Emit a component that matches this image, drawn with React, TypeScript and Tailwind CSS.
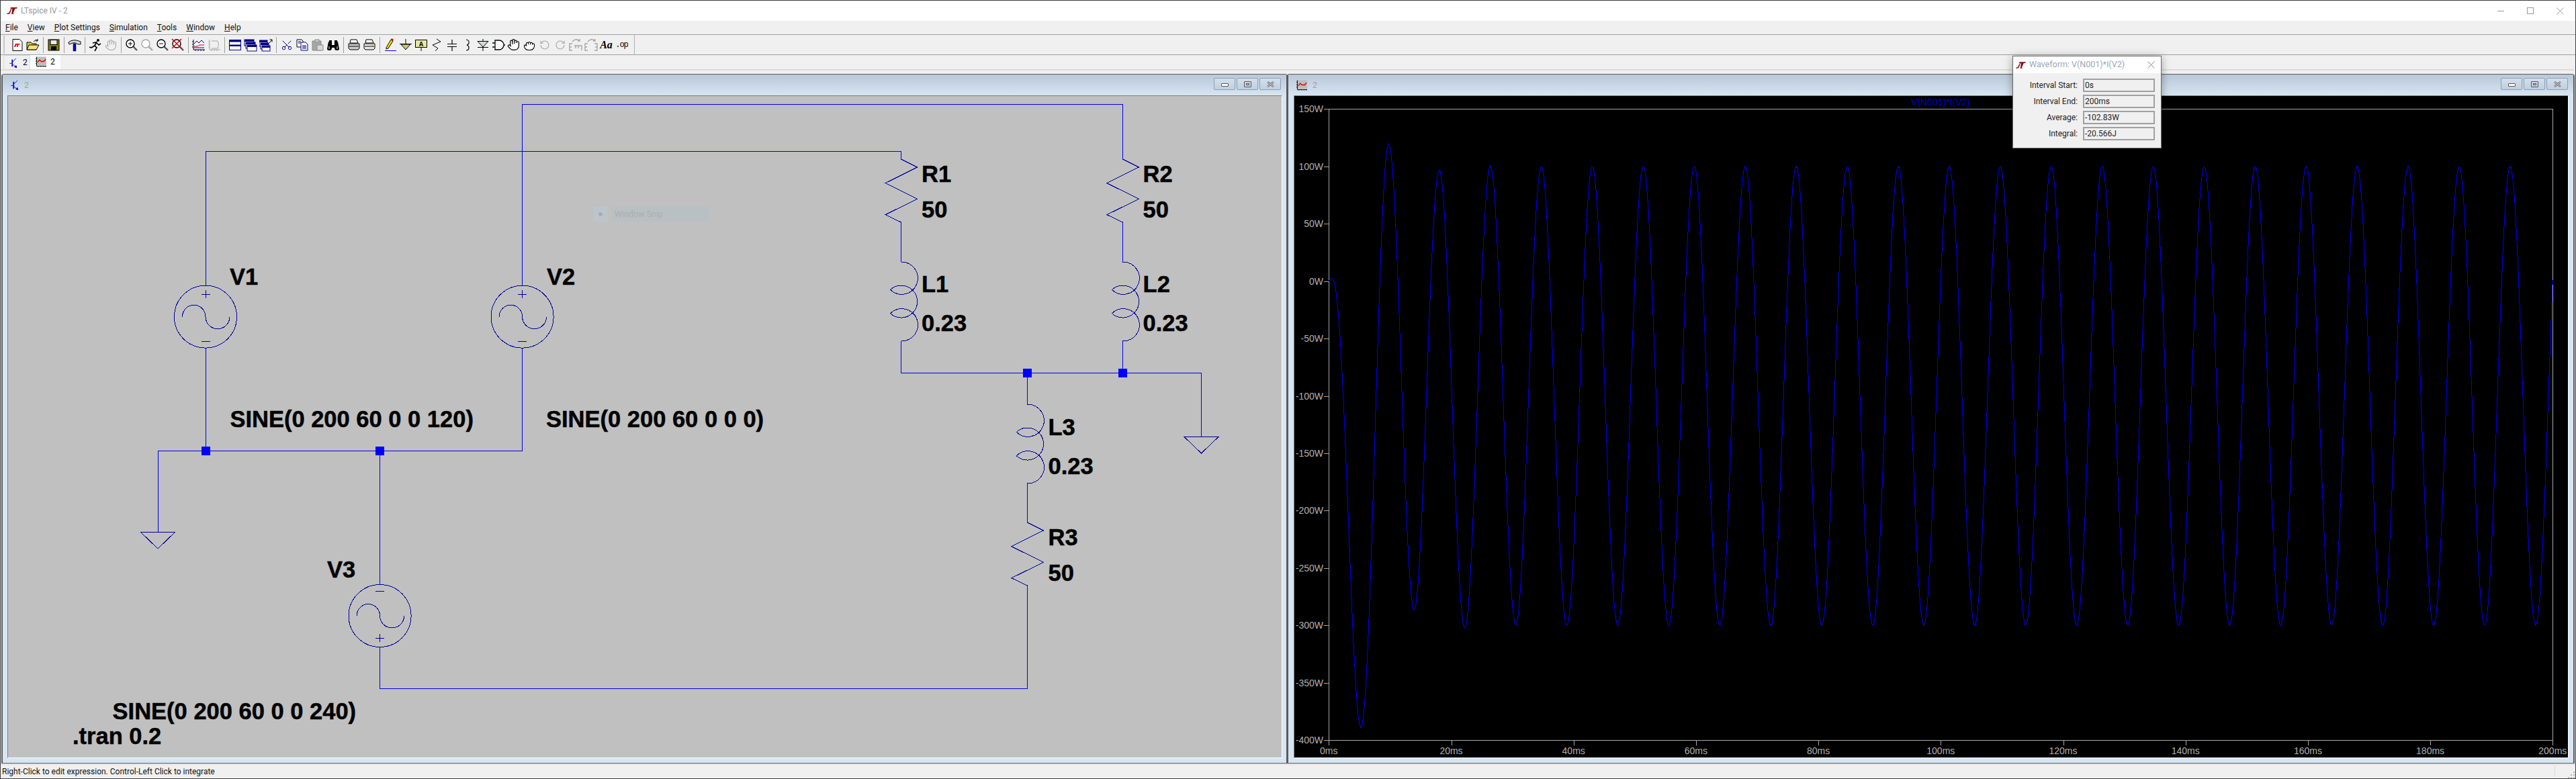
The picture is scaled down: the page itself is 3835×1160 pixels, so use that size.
import React from "react";
import { Hand, Grab, Scissors, RotateCcw, RotateCw } from "lucide-react";

const WIRE = "#0000e6";
const PART = "#00009a";

// page coordinates are used as the viewBox of both canvases
function Res({ x, y }: { x: number; y: number }) {
  return (
    <path
      d={`M${x} ${y} L${x + 24} ${y + 12} L${x - 23.5} ${y + 35.7} L${x + 24} ${y + 59.3} L${x - 23.5} ${y + 82.7} L${x} ${y + 94}`}
      fill="none"
      stroke={PART}
    />
  );
}

function Ind({ x, y }: { x: number; y: number }) {
  return (
    <path
      d={`M${x} ${y} A24 24 0 1 1 ${x - 16} ${y + 41} A24 24 0 1 1 ${x - 16} ${y + 76.5} A24 24 0 1 1 ${x} ${y + 117.4}`}
      fill="none"
      stroke={PART}
    />
  );
}

function Src({ x, y, flip }: { x: number; y: number; flip?: boolean }) {
  const plus = flip ? y + 33.4 : y - 33.4;
  const minus = flip ? y - 36.6 : y + 36.6;
  return (
    <g fill="none" stroke={PART}>
      <ellipse cx={x} cy={y} rx={46.5} ry={46.5} />
      <path d={`M${x - 6.5} ${plus} H${x + 6.5} M${x} ${plus - 6} V${plus + 6}`} />
      <path d={`M${x - 6.5} ${minus} H${x + 6.5}`} />
      <path d={`M${x - 34.5} ${y} A17.25 17.5 0 0 1 ${x} ${y} A18 18 0 0 0 ${x + 36} ${y}`} />
    </g>
  );
}

function Gnd({ x, y }: { x: number; y: number }) {
  return <path d={`M${x - 26} ${y} H${x + 26} L${x} ${y + 25} Z`} fill="none" stroke={PART} />;
}

function Label({ x, y, children }: { x: number; y: number; children: string }) {
  return (
    <text
      x={x}
      y={y}
      fontFamily="'Liberation Sans', Arial, sans-serif"
      fontWeight={700}
      fontSize={34.5}
      fill="#000"
      stroke="#000"
      strokeWidth={0.5}
    >
      {children}
    </text>
  );
}

function Schematic() {
  const wires = [
    "M306 225.3 H1341.5 V237",
    "M1341.5 331 V390.3",
    "M1341.5 507.7 V555.3 H1788.5 V650",
    "M777.6 425.2 V155 H1671.4 V237",
    "M1671.4 331 V390.3",
    "M1671.4 507.7 V555.3",
    "M306 225.3 V425.2",
    "M306 518.2 V671",
    "M777.6 518.2 V671 H235 V792",
    "M565.6 671 V870.5",
    "M565.6 963.5 V1025 H1529.4 V872",
    "M1529.4 555.3 V602.3",
    "M1529.4 719.7 V778",
  ];
  return (
    <svg viewBox="12 143 1896 985" className="block w-[1896px] h-[985px] bg-[#c0c0c0]">
      <g shapeRendering="crispEdges">
        {wires.map((d) => (
          <path key={d} d={d} fill="none" stroke={WIRE} />
        ))}
        {[
          [306, 671],
          [565.6, 671],
          [1529.4, 555.3],
          [1671.4, 555.3],
        ].map(([x, y]) => (
          <rect key={x} x={x - 6.5} y={y - 6.5} width={13} height={13} fill="#0000ff" />
        ))}
        <Res x={1341.5} y={237} />
        <Res x={1671.4} y={237} />
        <Res x={1529.4} y={778} />
        <Ind x={1341.5} y={390.3} />
        <Ind x={1671.4} y={390.3} />
        <Ind x={1529.4} y={602.3} />
        <Src x={306} y={471.7} />
        <Src x={777.6} y={471.7} />
        <Src x={565.6} y={917} flip />
        <Gnd x={235} y={792} />
        <Gnd x={1788.5} y={650} />
      </g>
      <Label x={1372} y={270.7}>R1</Label>
      <Label x={1372} y={323.7}>50</Label>
      <Label x={1372} y={434.7}>L1</Label>
      <Label x={1372} y={493.3}>0.23</Label>
      <Label x={1701.6} y={270.7}>R2</Label>
      <Label x={1701.6} y={323.7}>50</Label>
      <Label x={1701.6} y={434.7}>L2</Label>
      <Label x={1701.6} y={493.3}>0.23</Label>
      <Label x={1560.5} y={648}>L3</Label>
      <Label x={1560.5} y={706.3}>0.23</Label>
      <Label x={1560.5} y={812.3}>R3</Label>
      <Label x={1560.5} y={865}>50</Label>
      <Label x={342} y={424}>V1</Label>
      <Label x={814} y={424}>V2</Label>
      <Label x={487} y={860}>V3</Label>
      <Label x={342.4} y={636}>SINE(0 200 60 0 0 120)</Label>
      <Label x={813} y={636}>SINE(0 200 60 0 0 0)</Label>
      <Label x={167.6} y={1071}>SINE(0 200 60 0 0 240)</Label>
      <Label x={108} y={1107.7}>.tran 0.2</Label>
    </svg>
  );
}

const PX0 = 1978.3;
const PMS = 9.11;
const PY0 = 162.3;
const PW = 85.45 / 50;

function power(t: number) {
  return (
    -100 +
    200 * Math.cos((2 * Math.PI * (t - 1.389)) / 8.333) -
    321 * Math.exp(-t / 4.6) * Math.sin((2 * Math.PI * t) / 16.667)
  );
}

function tracePoints() {
  const pts: string[] = [];
  for (let t = 0; t <= 200; t += 0.2) {
    pts.push(`${(PX0 + t * PMS).toFixed(1)},${(PY0 + (150 - power(t)) * PW).toFixed(1)}`);
  }
  return pts.join(" ");
}

function Plot() {
  const ys = [150, 100, 50, 0, -50, -100, -150, -200, -250, -300, -350, -400];
  const xs = [0, 20, 40, 60, 80, 100, 120, 140, 160, 180, 200];
  const font = "'Liberation Sans', Arial, sans-serif";
  return (
    <svg viewBox="1927 143 1896 985" className="block w-[1896px] h-[985px] bg-black">
      <g shapeRendering="crispEdges" stroke="#a8a8a8" fill="none">
        <path d="M1971 162.5 H3800.5 V1110 M1978.5 162.5 V1110 M1971 1102.5 H3800.5" />
        {ys.map((v) => {
          const y = Math.round(PY0 + (150 - v) * PW) + 0.5;
          return <path key={v} d={`M1971 ${y} H1978`} />;
        })}
        {xs.map((ms) => {
          const x = Math.round(PX0 + ms * PMS) + 0.5;
          return <path key={ms} d={`M${x} 1102 V1110`} />;
        })}
      </g>
      <polyline points={tracePoints()} fill="none" stroke="#0000ff" shapeRendering="crispEdges" />
      {ys.map((v) => (
        <text key={v} x={1970} y={PY0 + (150 - v) * PW + 5} textAnchor="end" fontFamily={font} fontSize={14} fill="#b0b0b0">
          {v}W
        </text>
      ))}
      {xs.map((ms) => (
        <text key={ms} x={PX0 + ms * PMS} y={1123} textAnchor="middle" fontFamily={font} fontSize={14} fill="#b0b0b0">
          {ms}ms
        </text>
      ))}
      <text x={2889} y={157} textAnchor="middle" fontFamily={font} fontSize={14} fill="#0000c8">
        V(N001)*I(V2)
      </text>
    </svg>
  );
}

/* small icons */
function Ic({ children }: { children: React.ReactNode }) {
  return (
    <svg viewBox="0 0 20 20" className="w-5 h-5">
      {children}
    </svg>
  );
}

function LtLogo({ className }: { className: string }) {
  return (
    <svg viewBox="0 0 16 10" className={className}>
      <path d="M0 10 L1 8.5 L3 8.5 L6.5 1.5 L5 1.5 L6 0 L16 0 L15 1.8 L12.6 1.8 L9.6 8.5 L10.8 10 L7 10 L7.4 8.5 L8.4 1.8 L7.6 1.8 L5 8.5 L3.6 10 Z" fill="#8c0f0f" />
    </svg>
  );
}

function Transistor({ className }: { className: string }) {
  return (
    <svg viewBox="0 0 13 17" className={className} fill="none" stroke="#0000e0">
      <path d="M0 9.5 H4" />
      <path d="M4.5 3 V15" strokeWidth={2} />
      <path d="M5 7 L11 1 M5 11 L11 16" />
      <path d="M12 17 L8.5 15.5 L11 13 Z" fill="#0000e0" />
    </svg>
  );
}

function PlotIcon({ className }: { className: string }) {
  return (
    <svg viewBox="0 0 17 16" className={className} fill="none">
      <rect x="2" y="0" width="15" height="14" fill="#bdbdbd" />
      <path d="M1.5 0 V15 H17 M0 3 H2 M0 7 H2 M0 11 H2 M4 15 V16 M8 15 V16 M12 15 V16 M16 15 V16" stroke="#000" />
      <path d="M3 9 L6 5 L9 7.5 L13 7.5 L16 4" stroke="#e00000" strokeWidth={1.5} />
    </svg>
  );
}

function Magnifier({ c = "#000", children }: { c?: string; children?: React.ReactNode }) {
  return (
    <Ic>
      <circle cx="8" cy="8" r="6" fill="#fff" stroke={c} strokeWidth={1.4} />
      <path d="M12.5 12.5 L18 18" stroke={c === "#000" ? "#555" : c} strokeWidth={2.4} />
      {children}
    </Ic>
  );
}

const Gray = "#a6a6a6";

function Printer({ dots }: { dots?: boolean }) {
  return (
    <Ic>
      <path d="M5 2 H14 L16 7 H4 Z" fill="#fff" stroke="#000" />
      <path d="M2 8 H18 V15 L16 17 H4 L2 15 Z" fill={dots ? "#ccc" : "#e8e8e8"} stroke="#000" />
      <path d="M3 12 H17" stroke="#000" />
      {!dots && <path d="M13 9 H16" stroke="#d8b000" strokeWidth={1.5} />}
    </Ic>
  );
}

function Win({ x, y, w = 14, h = 9 }: { x: number; y: number; w?: number; h?: number }) {
  return (
    <g>
      <rect x={x} y={y} width={w} height={h} fill="#fff" stroke="#000080" />
      <rect x={x} y={y} width={w} height={3} fill="#000080" />
    </g>
  );
}

function Sep() {
  return (
    <div className="w-2 h-6 flex justify-center">
      <div className="w-px h-full bg-[#a0a0a0]" />
    </div>
  );
}

function Tool({ children }: { children: React.ReactNode }) {
  return <div className="w-[23px] h-6 flex items-center justify-center shrink-0">{children}</div>;
}

function Toolbar() {
  return (
    <div className="h-[31px] bg-[#f0f0f0] border-y border-[#a0a0a0] flex items-center pl-[4px] relative">
      <div className="w-[9px] h-[27px] border-l-2 border-[#c8c8c8]" />
      <Tool>
        <Ic>
          <path d="M3 1.5 H13 L17 5.5 V18.5 H3 Z" fill="#fff" stroke="#000" />
          <path d="M5 13 L7 8 H14 L13 9.6 H11.6 L10.4 13 H8.6 L9.6 9.6 H8.4 L7 13 Z" fill="#e00000" />
        </Ic>
      </Tool>
      <Tool>
        <Ic>
          <path d="M1 17 V6 H7 L9 8 H15 V17 Z" fill="#e8c040" stroke="#000" />
          <path d="M1 17 L4 10 H19 L15 17 Z" fill="#ffe070" stroke="#000" />
          <path d="M11 5 Q14 1 17 3 M17 1 V4 H14" fill="none" stroke="#000" />
        </Ic>
      </Tool>
      <Sep />
      <Tool>
        <Ic>
          <rect x="2" y="2" width="16" height="16" fill="#808000" stroke="#000" />
          <rect x="5" y="2.5" width="10" height="7" fill="#e8e8d8" stroke="#000" />
          <rect x="6" y="12" width="8" height="6" fill="#000" />
        </Ic>
      </Tool>
      <Sep />
      <Tool>
        <Ic>
          <path d="M1 6 Q8 0 19 5 V9 H15 Q10 5 5 8 L2 9 Z" fill="#d8d8d8" stroke="#000" />
          <rect x="8" y="8" width="4" height="11" fill="#0000d0" stroke="#000" strokeWidth={0.5} />
        </Ic>
      </Tool>
      <Sep />
      <Tool>
        <Ic>
          <circle cx="14" cy="3" r="2" fill="#000" />
          <path d="M12 5 L9 11 L12 14 L9 19 M9 11 L4 14 L1 13 M11 6 L6 7 M12 7 L15 10 L18 8" fill="none" stroke="#000" strokeWidth={1.7} />
        </Ic>
      </Tool>
      <Tool>
        <Hand size={18} strokeWidth={1.4} color={Gray} />
      </Tool>
      <Sep />
      <Tool>
        <Magnifier>
          <path d="M5 8 H11 M8 5 V11" stroke="#000" />
        </Magnifier>
      </Tool>
      <Tool>
        <Magnifier c={Gray} />
      </Tool>
      <Tool>
        <Magnifier>
          <path d="M5 8 H11" stroke="#000" />
        </Magnifier>
      </Tool>
      <Tool>
        <Magnifier>
          <path d="M1 1 L15 15 M15 1 L1 15" stroke="#e00000" strokeWidth={1.5} />
        </Magnifier>
      </Tool>
      <Sep />
      <Tool>
        <Ic>
          <path d="M2 2 V17 H19 M0 5 H2 M0 9 H2 M0 13 H2 M5 17 V19 M9 17 V19 M13 17 V19 M17 17 V19" stroke="#000" fill="none" />
          <path d="M3 8 L7 4 L10 7 L14 3 L18 7" stroke="#000080" fill="none" />
          <path d="M3 12 H8 L11 10 H18" stroke="#e00000" fill="none" />
          <path d="M3 14 H18" stroke="#0000e0" />
        </Ic>
      </Tool>
      <Tool>
        <Ic>
          <path d="M3 2 V17 H19 M1 5 H3 M1 9 H3 M1 13 H3 M6 17 V19 M10 17 V19 M14 17 V19 M6 4 H15 Q18 9 15 15 H6" stroke={Gray} fill="none" />
        </Ic>
      </Tool>
      <Sep />
      <Tool>
        <Ic>
          <rect x="1.5" y="2.5" width="17" height="15" fill="#fff" stroke="#000080" />
          <rect x="1.5" y="2.5" width="17" height="3" fill="#000080" />
          <rect x="1.5" y="9.5" width="17" height="2.5" fill="#000080" />
        </Ic>
      </Tool>
      <Tool>
        <Ic>
          <Win x={1} y={2} />
          <Win x={3} y={6} />
          <Win x={5} y={10} />
        </Ic>
      </Tool>
      <Tool>
        <Ic>
          <Win x={0} y={3} w={12} />
          <Win x={2} y={7} w={12} />
          <Win x={4} y={11} w={12} h={8} />
          <path d="M15 7 L19 2 M15.5 2 H19 V5.5" fill="none" stroke="#000" />
        </Ic>
      </Tool>
      <Sep />
      <Tool>
        <Scissors size={18} strokeWidth={1.3} color="#000080" className="-rotate-90" />
      </Tool>
      <Tool>
        <Ic>
          <path d="M2 2 H9 L11 4 V13 H2 Z" fill="#fff" stroke="#000" />
          <path d="M8 6 H15 L18 9 V18 H8 Z" fill="#fff" stroke="#000080" />
          <path d="M4 5 H8 M4 7 H7 M10 11 H16 M10 13 H16 M10 15 H16" stroke="#000080" />
        </Ic>
      </Tool>
      <Tool>
        <Ic>
          <path d="M2 4 H15 V18 H2 Z" fill={Gray} stroke="#8a8a8a" />
          <rect x="6" y="2" width="6" height="4" fill="#c8c8c8" stroke="#8a8a8a" />
          <path d="M9 10 H18 V18 H9 Z" fill="#d8d8d8" stroke="#8a8a8a" />
        </Ic>
      </Tool>
      <Tool>
        <Ic>
          <path d="M3 5 H8 V10 H12 V5 H17 L19 16 Q19 18 15 18 Q12 18 12 14 H8 Q8 18 5 18 Q1 18 1 16 Z" fill="#000" />
          <path d="M4 4 H8 M12 4 H16" stroke="#000" strokeWidth={2} />
          <path d="M4 12 V16 M16 12 V16" stroke="#fff" />
        </Ic>
      </Tool>
      <Sep />
      <Tool>
        <Printer dots />
      </Tool>
      <Tool>
        <Printer />
      </Tool>
      <Sep />
      <Tool>
        <Ic>
          <path d="M4 14 L11 2 L14 4 L7 15 L4 16 Z" fill="#ffe000" stroke="#000" />
          <path d="M11 2 L14 4 L15 2 L12 0 Z" fill="#e00000" />
          <path d="M2 18.5 H19" stroke="#0000ff" />
        </Ic>
      </Tool>
      <Tool>
        <Ic>
          <path d="M10 1 V8 M1 8.5 H19" stroke="#000" />
          <path d="M3 9 H17 L10 17 Z" fill="#c8c878" stroke="#000" />
        </Ic>
      </Tool>
      <Tool>
        <Ic>
          <rect x="1.5" y="2.5" width="17" height="11" fill="#e8e8a0" stroke="#000" />
          <path d="M10 14 V19" stroke="#000" />
          <text x="10" y="12" textAnchor="middle" fontSize="10" fontWeight="700" fontFamily="'Liberation Mono', monospace" fill="#000">
            A
          </text>
        </Ic>
      </Tool>
      <Tool>
        <Ic>
          <path d="M10 1 L16 5 L4 10 L12 15 L8 19" fill="none" stroke="#000" />
        </Ic>
      </Tool>
      <Tool>
        <Ic>
          <path d="M10 2 V8 M3 8.5 H17 M3 12.5 H17 M10 13 V19" fill="none" stroke="#000" strokeWidth={1.2} />
        </Ic>
      </Tool>
      <Tool>
        <Ic>
          <path d="M8 2 Q13 3 12 7 Q11 10 9 10 Q12 11 12 14 Q12 18 8 18" fill="none" stroke="#000" strokeWidth={1.2} />
        </Ic>
      </Tool>
      <Tool>
        <Ic>
          <path d="M2 4.5 H18 L10 13 Z" fill="#d0d8d8" stroke="#000" />
          <path d="M2 13.5 H18 M10 1 V4 M10 13 V19" stroke="#000" />
        </Ic>
      </Tool>
      <Tool>
        <Ic>
          <path d="M5 3 H11 A7 7 0 0 1 11 17 H5 Z M1 7 H5 M1 13 H5 M18 10 H20" fill="#fff" stroke="#000" strokeWidth={1.3} />
        </Ic>
      </Tool>
      <Tool>
        <Hand size={19} strokeWidth={1.5} color="#000" fill="#fff" />
      </Tool>
      <Tool>
        <Grab size={18} strokeWidth={1.5} color="#000" fill="#fff" />
      </Tool>
      <Tool>
        <RotateCcw size={16} strokeWidth={1.6} color={Gray} />
      </Tool>
      <Tool>
        <RotateCw size={16} strokeWidth={1.6} color={Gray} />
      </Tool>
      <Tool>
        <Ic>
          <path d="M5 5 Q10 -1 16 4 M16 1 V4 H13 M5 8 H1 V18 H5 M1 13 H4 M8 11 H19 V18 M10 11 V15 M14 11 V15" fill="none" stroke={Gray} strokeWidth={1.4} />
        </Ic>
      </Tool>
      <Tool>
        <Ic>
          <path d="M5 5 Q10 -1 16 4 M16 1 V4 H13 M5 8 H1 V18 H5 M1 13 H4 M15 8 H19 V18 H15 M19 13 H16" fill="none" stroke={Gray} strokeWidth={1.4} />
        </Ic>
      </Tool>
      <Tool>
        <span className="font-['Liberation_Serif',serif] italic font-bold text-[16px] leading-none text-black">Aa</span>
      </Tool>
      <Tool>
        <span className="font-['Liberation_Mono',monospace] text-[12px] leading-none text-black tracking-[-1px]">.op</span>
      </Tool>
      <div className="ml-[7px] w-px h-[29px] bg-[#b0b0b0]" />
    </div>
  );
}

function CaptionButton({ kind }: { kind: "min" | "max" | "close" }) {
  return (
    <div className="w-[32px] h-[18px] rounded-[2px] border border-[#8c9fb8] bg-gradient-to-b from-[#d3dfeb] to-[#c0cfdf] flex items-center justify-center">
      {kind === "min" && <div className="mt-[3px] w-[11px] h-[5px] border border-[#555] rounded-[1px] bg-white" />}
      {kind === "max" && (
        <div className="w-[11px] h-[9px] border border-[#555] rounded-[1px] flex items-center justify-center">
          <div className="w-[5px] h-[3px] border border-[#555]" />
        </div>
      )}
      {kind === "close" && (
        <svg viewBox="0 0 11 9" className="w-[11px] h-[9px]">
          <path d="M1 1 L10 8 M10 1 L1 8" stroke="#555" strokeWidth={2.6} />
          <path d="M1 1 L10 8 M10 1 L1 8" stroke="#fff" strokeWidth={1} />
        </svg>
      )}
    </div>
  );
}

function MdiWindow({
  icon,
  className,
  canvasClass,
  children,
}: {
  icon: React.ReactNode;
  className: string;
  canvasClass: string;
  children: React.ReactNode;
}) {
  return (
    <div className={`${className} h-full rounded-t-[4px] border-2 border-b-[1px] border-[#5a5a5a] border-t-[1px] bg-[#d7e5f3] flex flex-col`}>
      <div className="h-[31px] shrink-0 bg-gradient-to-b from-[#b9c8d7] to-[#d7e5f3] flex items-center justify-between pl-[12px] pr-[8px]">
        <div className="flex items-center gap-[8px]">
          {icon}
          <span className="text-[12px] text-[#a0a0a0]">2</span>
        </div>
        <div className="flex gap-[2px] pb-[3px]">
          <CaptionButton kind="min" />
          <CaptionButton kind="max" />
          <CaptionButton kind="close" />
        </div>
      </div>
      <div className={`${canvasClass} w-fit border border-[#808080] border-b-white border-r-white`}>{children}</div>
    </div>
  );
}

function Field({ label, value }: { label: string; value: string }) {
  return (
    <div className="flex items-center">
      <span className="w-[96px] text-right text-[12px] text-[#222] leading-none">{label}</span>
      <div className="ml-[8px] w-[107px] h-[20px] border-2 border-[#a0a0a0] bg-[#f0f0f0] flex items-center pl-[1px] text-[12px] text-[#222]">
        {value}
      </div>
    </div>
  );
}

export default function App() {
  const menus = ["File", "View", "Plot Settings", "Simulation", "Tools", "Window", "Help"];
  return (
    <div className="relative w-[3835px] h-[1160px] overflow-hidden border border-[#3c3c3c] bg-[#f0f0f0] font-['Roboto',sans-serif] flex flex-col">
      {/* title bar */}
      <div className="h-[30px] bg-white flex items-center pl-[9px] shrink-0">
        <LtLogo className="w-[16px] h-[10px]" />
        <span className="ml-[5px] text-[12px] text-[#9a9a9a]">LTspice IV - 2</span>
        <div className="ml-auto flex items-center gap-[34px] pr-[17px]">
          <div className="w-[10px] h-px bg-[#999]" />
          <div className="w-[10px] h-[10px] border border-[#999]" />
          <svg viewBox="0 0 11 11" className="w-[11px] h-[11px]">
            <path d="M0.5 0.5 L10.5 10.5 M10.5 0.5 L0.5 10.5" stroke="#999" />
          </svg>
        </div>
      </div>
      {/* menu */}
      <div className="h-[20px] shrink-0 flex items-center gap-[14px] pl-[7px] text-[12px] text-[#111]">
        {menus.map((m) => (
          <span key={m}>
            <span className="underline">{m[0]}</span>
            {m.slice(1)}
          </span>
        ))}
      </div>
      <Toolbar />
      {/* tabs */}
      <div className="h-[28px] shrink-0 mr-[2px]">
        <div className="h-[23px] flex items-end pl-[4px] border-b-2 border-[#dcdcdc]">
          <div className="w-[40px] h-[21px] border border-[#dcdcdc] border-b-0 flex items-center pl-[8px] gap-[8px] text-[12px] text-black">
            <Transistor className="w-[12px] h-[15px]" />
            <span>2</span>
          </div>
          <div className="w-[45px] h-[23px] bg-white flex items-center pl-[8px] gap-[6px] text-[12px] text-black">
            <PlotIcon className="w-[16px] h-[16px]" />
            <span>2</span>
          </div>
        </div>
      </div>
      {/* child windows */}
      <div className="flex-1 min-h-0 flex px-[1px]">
        <MdiWindow className="w-[1915px]" canvasClass="ml-[7px]" icon={<Transistor className="w-[12px] h-[15px]" />}>
          <Schematic />
        </MdiWindow>
        <MdiWindow className="flex-1 -ml-[1px]" canvasClass="ml-[8px]" icon={<PlotIcon className="w-[16px] h-[16px]" />}>
          <Plot />
        </MdiWindow>
      </div>
      {/* status */}
      <div className="h-[21px] shrink-0 mt-[1px] border-t border-[#dcdcdc] flex items-center pl-[2px] pr-[1px] text-[12px] text-[#111]">
        <span>Right-Click to edit expression. Control-Left Click to integrate</span>
        <div className="ml-auto mr-[18px] w-px h-[16px] bg-[#d8d8d8]" />
        <svg viewBox="0 0 11 11" className="w-[11px] h-[11px] self-end">
          <path d="M9 1h2v2H9zM5 5h2v2H5zM9 5h2v2H9zM1 9h2v2H1zM5 9h2v2H5zM9 9h2v2H9z" fill="#b0b0b0" />
        </svg>
      </div>

      {/* floating integration dialog */}
      <div className="absolute left-[2995px] top-[82px] w-[222px] h-[138px] border border-[#6a6a6a] bg-[#f0f0f0] shadow-[0_2px_12px_rgba(0,0,0,0.35)] flex flex-col">
        <div className="h-[25px] bg-white flex items-center pl-[4px] pr-[9px] shrink-0">
          <LtLogo className="w-[15px] h-[10px]" />
          <span className="ml-[5px] text-[12.5px] text-[#9aa6b8]">Waveform: V(N001)*I(V2)</span>
          <svg viewBox="0 0 11 11" className="ml-auto w-[11px] h-[11px]">
            <path d="M0.5 0.5 L10.5 10.5 M10.5 0.5 L0.5 10.5" stroke="#888" />
          </svg>
        </div>
        <div className="flex flex-col gap-[4px] pt-[8px] pl-0">
          <Field label="Interval Start:" value="0s" />
          <Field label="Interval End:" value="200ms" />
          <Field label="Average:" value="-102.83W" />
          <Field label="Integral:" value="-20.566J" />
        </div>
      </div>

      {/* faded snip hint left on the schematic */}
      <div className="absolute left-[882px] top-[306px] h-[23px] flex gap-[6px] text-[12.5px] text-[#adadad]">
        <div className="w-[22px] bg-[#bcc4cc] flex items-center justify-center">
          <div className="w-[6px] h-[6px] rounded-full bg-[#acacac]" />
        </div>
        <div className="w-[145px] bg-[#b9c0c4] pl-[4px] leading-[23px]">Window Snip</div>
      </div>
    </div>
  );
}
